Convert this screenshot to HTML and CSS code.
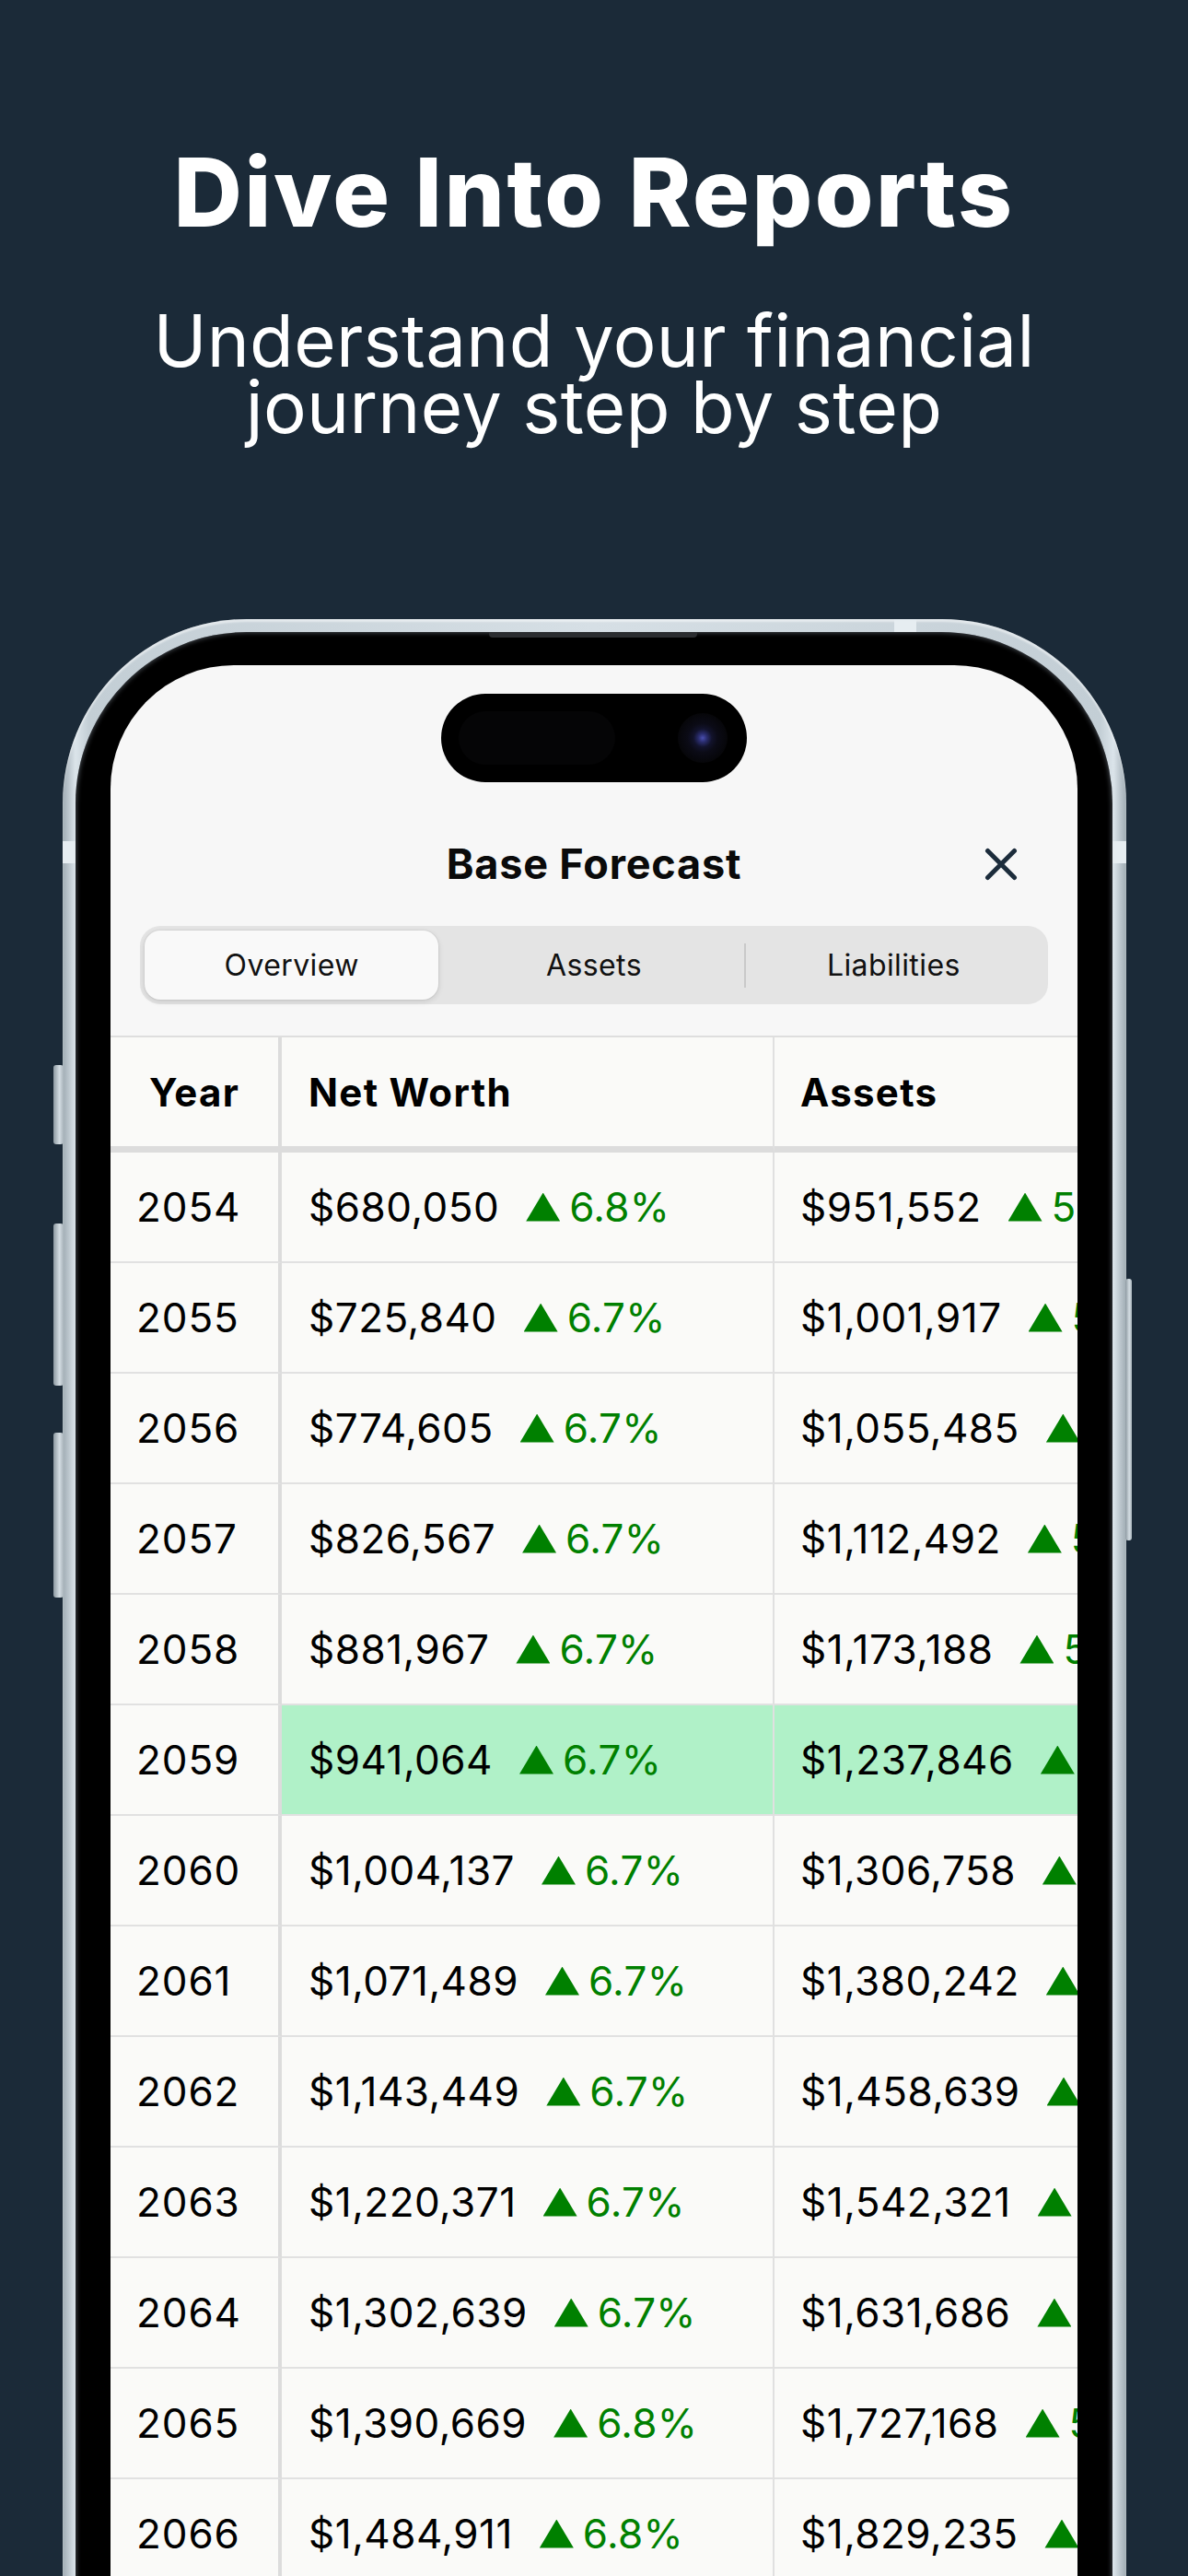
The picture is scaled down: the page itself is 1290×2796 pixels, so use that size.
FILE: index.html
```html
<!DOCTYPE html>
<html lang="en">
<head>
<meta charset="utf-8">
<title>Dive Into Reports</title>
<link rel="stylesheet" href="styles.css">
</head>
<body>
<div class="page">
  <header class="hero">
    <h1 class="title">Dive Into Reports</h1>
    <p class="subtitle"><span class="line">Understand your financial</span><span class="line">journey step by step</span></p>
  </header>

  <div class="phone">
    <span class="btn btn-action"></span>
    <span class="btn btn-vol-up"></span>
    <span class="btn btn-vol-down"></span>
    <span class="btn btn-power"></span>
    <span class="band band-left"></span>
    <span class="band band-right"></span>
    <span class="band band-top"></span>
    <div class="bezel">
      <span class="speaker"></span>
      <div class="screen">
        <div class="island">
          <span class="island-sensor"></span>
          <span class="lens"></span>
        </div>

        <div class="sheet-header">
          <span></span>
          <h2 class="sheet-title">Base Forecast</h2>
          <button class="close" aria-label="Close">
            <svg width="36" height="36" viewBox="0 0 36 36"><path d="M3.5 3.5 L32.5 32.5 M32.5 3.5 L3.5 32.5" stroke="#1c2c3b" stroke-width="5" stroke-linecap="round" fill="none"/></svg>
          </button>
        </div>

        <div class="segmented">
          <div class="seg active">Overview</div>
          <div class="seg">Assets</div>
          <div class="seg divided">Liabilities</div>
        </div>

        <div class="table">
          <div class="row head">
            <div class="cell year">Year</div>
            <div class="cell nw">Net Worth</div>
            <div class="cell as">Assets</div>
          </div>
          <div class="row"><div class="cell year">2054</div><div class="cell nw">$680,050<span class="tri"></span><span class="pct">6.8%</span></div><div class="cell as">$951,552<span class="tri"></span><span class="pct">5.3%</span></div></div>
          <div class="row"><div class="cell year">2055</div><div class="cell nw">$725,840<span class="tri"></span><span class="pct">6.7%</span></div><div class="cell as">$1,001,917<span class="tri"></span><span class="pct">5.3%</span></div></div>
          <div class="row"><div class="cell year">2056</div><div class="cell nw">$774,605<span class="tri"></span><span class="pct">6.7%</span></div><div class="cell as">$1,055,485<span class="tri"></span><span class="pct">5.3%</span></div></div>
          <div class="row"><div class="cell year">2057</div><div class="cell nw">$826,567<span class="tri"></span><span class="pct">6.7%</span></div><div class="cell as">$1,112,492<span class="tri"></span><span class="pct">5.4%</span></div></div>
          <div class="row"><div class="cell year">2058</div><div class="cell nw">$881,967<span class="tri"></span><span class="pct">6.7%</span></div><div class="cell as">$1,173,188<span class="tri"></span><span class="pct">5.5%</span></div></div>
          <div class="row hl"><div class="cell year">2059</div><div class="cell nw">$941,064<span class="tri"></span><span class="pct">6.7%</span></div><div class="cell as">$1,237,846<span class="tri"></span><span class="pct">5.5%</span></div></div>
          <div class="row"><div class="cell year">2060</div><div class="cell nw">$1,004,137<span class="tri"></span><span class="pct">6.7%</span></div><div class="cell as">$1,306,758<span class="tri"></span><span class="pct">5.6%</span></div></div>
          <div class="row"><div class="cell year">2061</div><div class="cell nw">$1,071,489<span class="tri"></span><span class="pct">6.7%</span></div><div class="cell as">$1,380,242<span class="tri"></span><span class="pct">5.6%</span></div></div>
          <div class="row"><div class="cell year">2062</div><div class="cell nw">$1,143,449<span class="tri"></span><span class="pct">6.7%</span></div><div class="cell as">$1,458,639<span class="tri"></span><span class="pct">5.7%</span></div></div>
          <div class="row"><div class="cell year">2063</div><div class="cell nw">$1,220,371<span class="tri"></span><span class="pct">6.7%</span></div><div class="cell as">$1,542,321<span class="tri"></span><span class="pct">5.7%</span></div></div>
          <div class="row"><div class="cell year">2064</div><div class="cell nw">$1,302,639<span class="tri"></span><span class="pct">6.7%</span></div><div class="cell as">$1,631,686<span class="tri"></span><span class="pct">5.8%</span></div></div>
          <div class="row"><div class="cell year">2065</div><div class="cell nw">$1,390,669<span class="tri"></span><span class="pct">6.8%</span></div><div class="cell as">$1,727,168<span class="tri"></span><span class="pct">5.9%</span></div></div>
          <div class="row"><div class="cell year">2066</div><div class="cell nw">$1,484,911<span class="tri"></span><span class="pct">6.8%</span></div><div class="cell as">$1,829,235<span class="tri"></span><span class="pct">5.9%</span></div></div>
        </div>
      </div>
    </div>
  </div>
</div>
</body>
</html>
```

FILE: styles.css
```css
* { box-sizing: border-box; }

html, body {
  margin: 0;
  padding: 0;
  width: 1290px;
  height: 2796px;
  overflow: hidden;
  background: #1b2a38;
}

.page {
  width: 1290px;
  height: 2796px;
  overflow: hidden;
  font-family: Inter, "Liberation Sans", sans-serif;
}

/* ---------- hero ---------- */
.hero {
  padding-top: 157px;
  text-align: center;
  color: #ffffff;
}

.title {
  margin: 0;
  font-size: 103px;
  line-height: 103px;
  font-weight: 800;
  letter-spacing: 2.5px;
}

.subtitle {
  margin: 74px 0 0;
  font-size: 78px;
  line-height: 72px;
  font-weight: 400;
  letter-spacing: 0.3px;
}
.subtitle .line {
  display: block;
  height: 72px;
}

/* ---------- phone ---------- */
.phone {
  position: relative;
  margin: 194px 0 0 68px;
  width: 1155px;
  height: 2300px;
  padding: 14px 15px 0 14px;
  border-radius: 200px 200px 0 0;
  background: linear-gradient(90deg, #9fabb3 0%, #dbe4ea 1.2%, #c3ced5 2.5%, #d6dfe5 50%, #c3ced5 97.5%, #dbe4ea 98.8%, #9fabb3 100%);
  box-shadow: inset 0 3px 2px rgba(255,255,255,0.5);
}

.btn {
  position: absolute;
  background: linear-gradient(90deg, #8d99a1, #d4dde3 60%, #a9b4bb);
  border-radius: 3px;
}
.btn-action   { left: -10px; top: 484px; width: 11px; height: 86px; }
.btn-vol-up   { left: -10px; top: 656px; width: 11px; height: 176px; }
.btn-vol-down { left: -10px; top: 883px; width: 11px; height: 179px; }
.btn-power    { right: -6px; top: 716px; width: 7px; height: 284px; }

.band {
  position: absolute;
  background: #e6edf1;
}
.band-left  { left: 0; top: 241px; width: 14px; height: 24px; }
.band-right { right: 0; top: 241px; width: 15px; height: 24px; }
.band-top   { left: 903px; top: 0; width: 24px; height: 14px; }

.bezel {
  position: relative;
  height: 100%;
  padding: 36px 38px 0 38px;
  border-radius: 186px 186px 0 0;
  background: #000;
  box-shadow: inset 0 0 5px 1px rgba(120,130,140,0.55);
}

.speaker {
  position: absolute;
  left: 449px;
  top: 0;
  width: 226px;
  height: 6px;
  border-radius: 0 0 4px 4px;
  background: #2b2d30;
}

.screen {
  position: relative;
  height: 100%;
  overflow: hidden;
  border-radius: 134px 134px 0 0;
  background: #f7f7f7;
  padding-top: 31px;
}

/* ---------- dynamic island ---------- */
.island {
  position: relative;
  margin: 0 auto;
  width: 332px;
  height: 96px;
  border-radius: 48px;
  background: #000;
}
.island-sensor {
  position: absolute;
  left: 19px;
  top: 19px;
  width: 170px;
  height: 58px;
  border-radius: 29px;
  background: #050506;
}
.lens {
  position: absolute;
  left: 257px;
  top: 21px;
  width: 54px;
  height: 54px;
  border-radius: 50%;
  background: radial-gradient(circle at 50% 50%, #4a4fb0 0, #2a2d6e 12%, #12132c 26%, #0b0b16 42%, #060609 70%, #000 100%);
}

/* ---------- sheet header ---------- */
.sheet-header {
  margin-top: 59px;
  height: 60px;
  display: grid;
  grid-template-columns: 1fr auto 1fr;
  align-items: center;
}
.sheet-title {
  margin: 0;
  font-size: 45px;
  line-height: 60px;
  font-weight: 700;
  color: #0a0a0a;
  letter-spacing: 0.8px;
}
.close {
  justify-self: end;
  margin-right: 65px;
  width: 36px;
  height: 36px;
  padding: 0;
  border: 0;
  background: none;
  display: flex;
}

/* ---------- segmented control ---------- */
.segmented {
  margin: 37px 32px 0;
  height: 85px;
  padding: 5px;
  border-radius: 22px;
  background: #e4e4e4;
  display: grid;
  grid-template-columns: 1fr 1fr 1fr;
}
.seg {
  position: relative;
  display: flex;
  align-items: center;
  justify-content: center;
  font-size: 32px;
  color: #111;
  letter-spacing: 0.4px;
  border-radius: 17px;
}
.seg.active {
  margin-right: 6px;
  background: #f9f9f9;
  box-shadow: 0 0 0 1px rgba(0,0,0,0.04), 0 2px 6px rgba(0,0,0,0.12);
}
.seg.divided::before {
  content: "";
  position: absolute;
  left: 0;
  top: 14px;
  bottom: 13px;
  width: 2px;
  background: #c9c9c9;
}

/* ---------- table ---------- */
.table {
  margin-top: 34px;
  width: 1320px;
  border-top: 2px solid #dedede;
  background: #fafaf8;
}
.row {
  display: grid;
  grid-template-columns: 186px 535px 599px;
  height: 120px;
}
.row.head {
  height: 125px;
}
.cell {
  display: flex;
  align-items: center;
  white-space: nowrap;
  border-bottom: 2px solid #e1e1e1;
  font-size: 44px;
  color: #000;
  letter-spacing: 0.5px;
}
.cell.year {
  padding-left: 28px;
  border-right: 4px solid #dcdcdc;
  letter-spacing: 0.9px;
}
.head .cell {
  border-bottom: 7px solid #dcdcdc;
  font-weight: 700;
  font-size: 42px;
  letter-spacing: 1.3px;
}
.head .cell.year {
  padding-left: 0;
  justify-content: center;
}
.cell.nw {
  padding-left: 29px;
  border-right: 2px solid #e0e0e0;
}
.cell.as {
  padding-left: 28px;
}
.hl .cell.nw,
.hl .cell.as {
  background: #b0f1c8;
}

.tri {
  display: inline-block;
  flex-shrink: 0;
  width: 37px;
  height: 31px;
  margin-left: 29px;
  margin-right: 10px;
  background: #008000;
  clip-path: polygon(50% 0, 100% 100%, 0 100%);
}
.pct {
  color: #008000;
  letter-spacing: 0.3px;
}
```
